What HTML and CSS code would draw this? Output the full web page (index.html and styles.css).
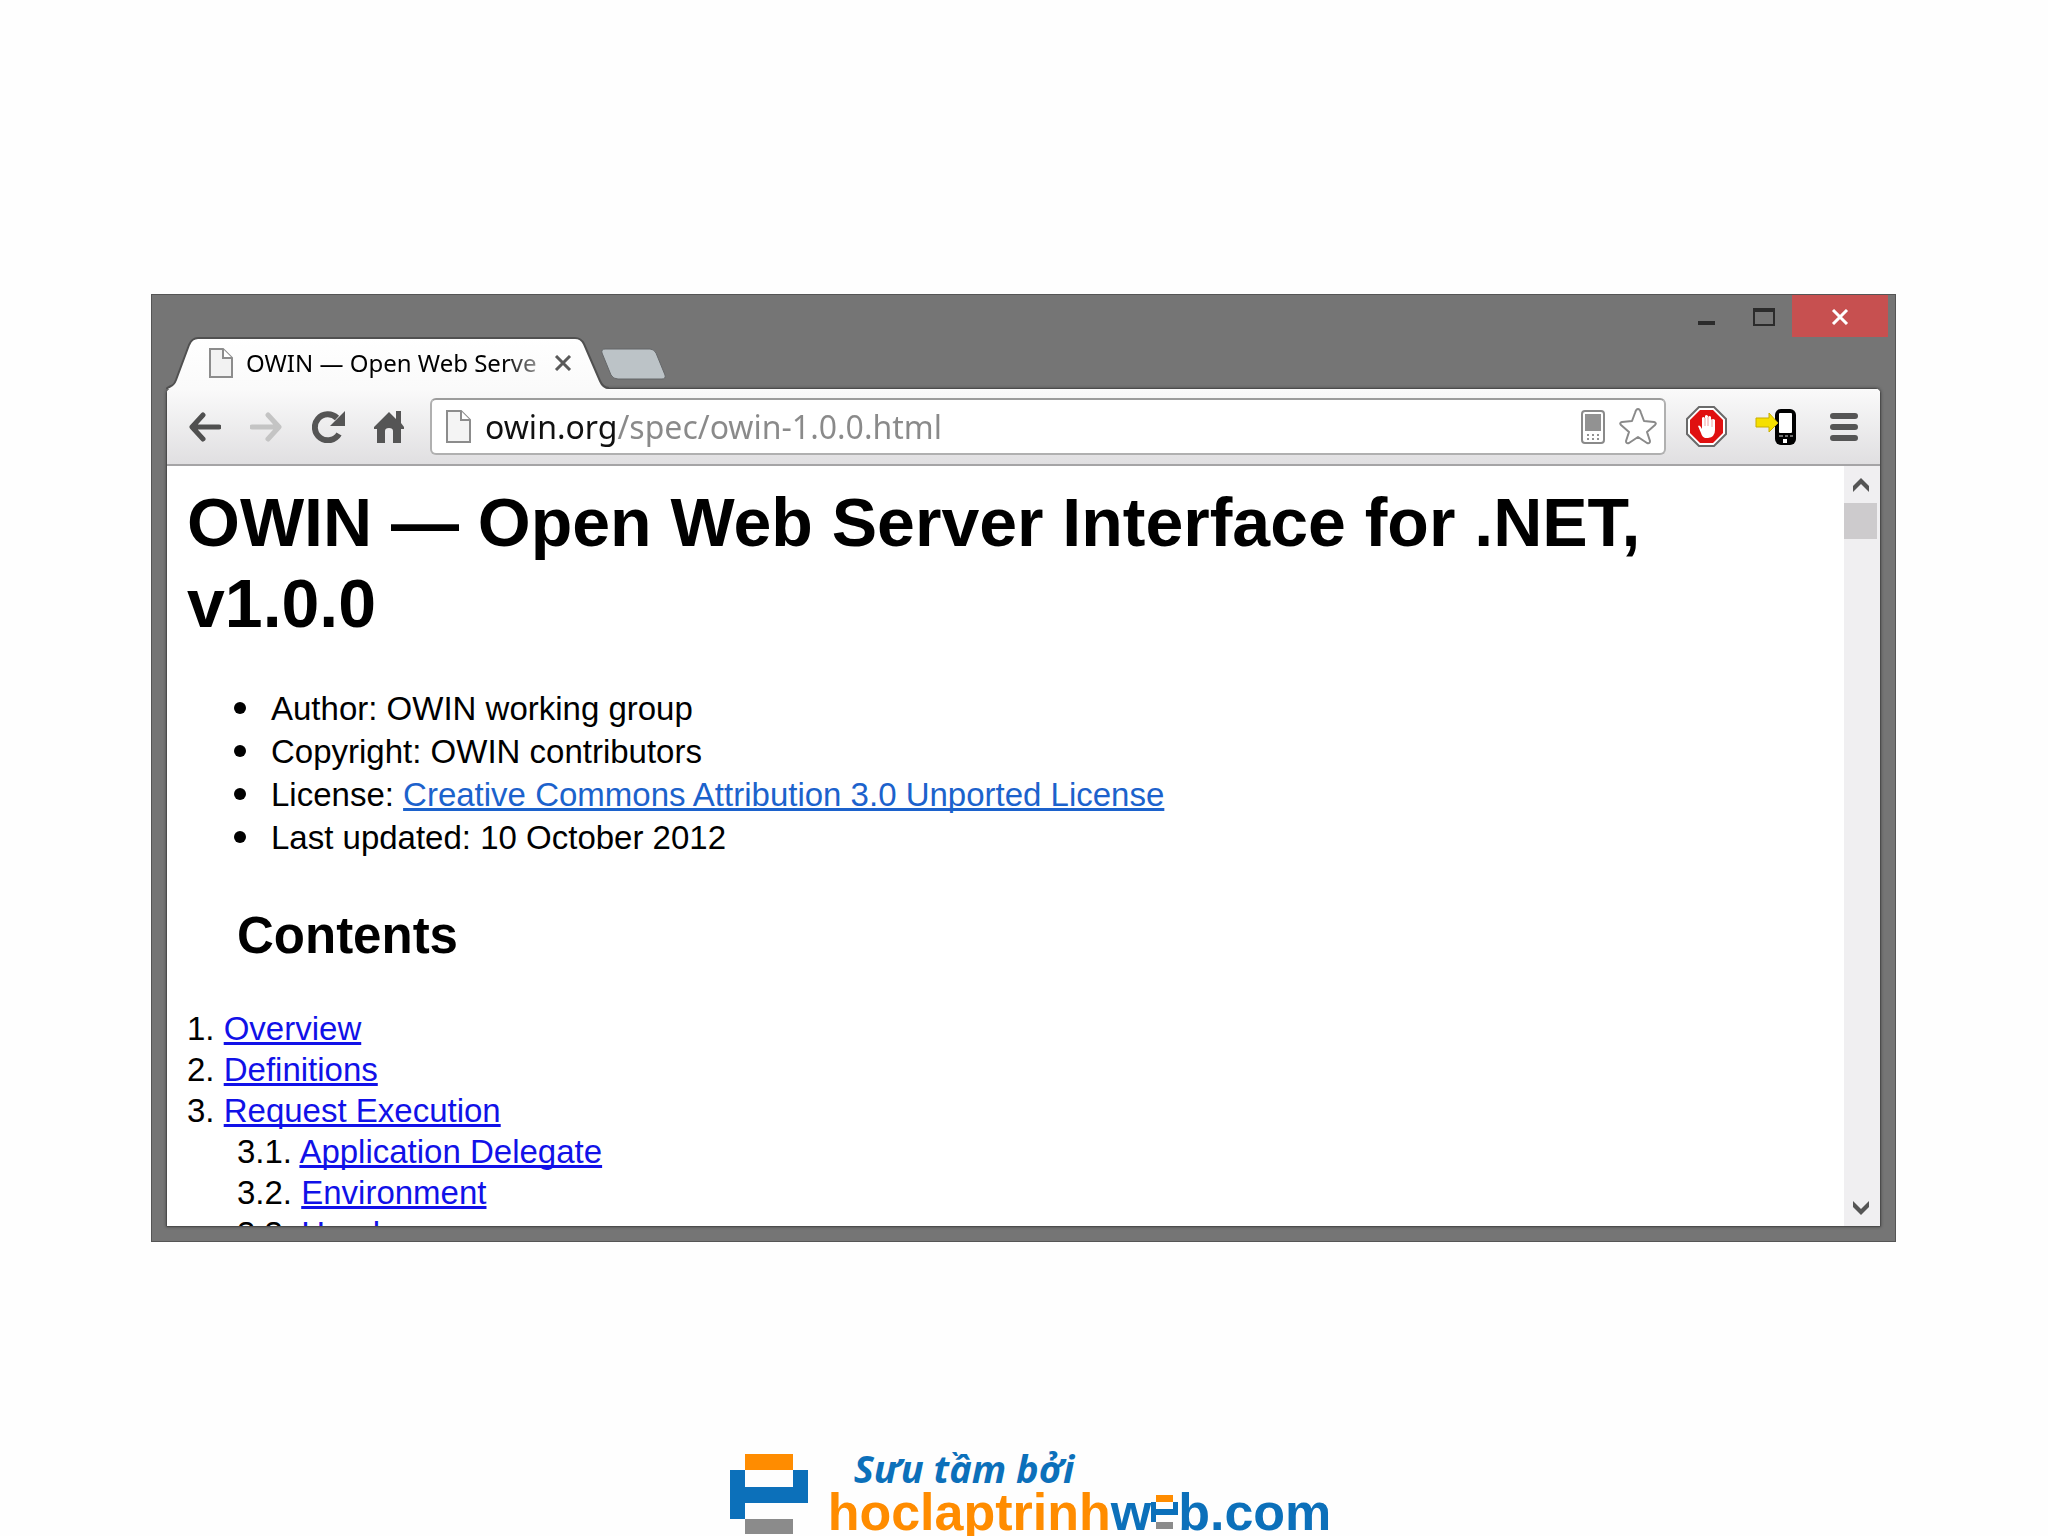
FILE: index.html
```html
<!DOCTYPE html>
<html lang="en">

<head>
	<meta charset="UTF-8" />
	<meta name="viewport" content="width=device-width,initial-scale=1" />
	<title>OWIN — Open Web Server Interface for .NET, v1.0.0</title>
	<link rel="stylesheet" href="styles.css">
</head>

<body>
	<div class="window">
		<div class="controls">
			<button class="control" aria-label="Minimize">
				<svg width="18" height="18" viewBox="0 0 18 18"><path d="M0 13h17v4H0z" fill="#2b2b2b" /></svg>
			</button>
			<button class="control max" aria-label="Maximize">
				<svg width="22" height="18" viewBox="0 0 22 18"><path d="M1 2v15h20V2z" fill="none" stroke="#2b2b2b" stroke-width="2" /><path d="M0 0h22v4H0z" fill="#2b2b2b" /></svg>
			</button>
			<button class="control close" aria-label="Close">
				<svg width="18" height="16" viewBox="0 0 18 16"><path d="M2 1l14 14M16 1L2 15" stroke="#fff" stroke-width="3" /></svg>
			</button>
		</div>

		<div class="tabs">
			<div class="tab">
				<svg class="tab-shape" viewBox="0 0 443 52" preserveAspectRatio="none">
					<defs>
						<linearGradient id="tabfill" x1="0" y1="0" x2="0" y2="1">
							<stop offset="0" stop-color="#fff" />
							<stop offset="1" stop-color="#fafafa" />
						</linearGradient>
					</defs>
					<path d="M0 52Q1 51 5 49Q8 48 10 43L23 8Q26 1 32 1H409Q415 1 418 7L434 44Q437 51 443 52Z" fill="url(#tabfill)" />
					<path d="M0 52Q1 51 5 49Q8 48 10 43L23 8Q26 1 32 1H409Q415 1 418 7L434 44Q437 51 443 51" fill="none" stroke="#505050" stroke-width="2" />
				</svg>
				<div class="tab-content">
					<svg width="24" height="30" viewBox="0 0 24 30"><path d="M1 1h13l9 9v19H1z" fill="#f2f2f2" stroke="#8c8c8c" stroke-width="2" /><path d="M14 1v9h9" fill="#fff" stroke="#8c8c8c" stroke-width="2" /></svg>
					<span class="tab-title">OWIN — Open Web Serve</span>
					<button class="tab-close" aria-label="Close tab">
						<svg width="18" height="16" viewBox="0 0 18 16"><path d="M2 1l14 14M16 1L2 15" stroke="#5a5a5a" stroke-width="3" /></svg>
					</button>
				</div>
			</div>
			<button class="new-tab" aria-label="New tab">
				<svg width="66" height="32" viewBox="0 0 66 32"><path d="M4 1H49Q53 1 55 5L64 27Q65 31 61 31H17Q12 31 10 27L1 5Q0 1 4 1Z" fill="#bcc3c7" stroke="#656769" /></svg>
			</button>
		</div>

		<div class="frame">
			<div class="toolbar">
				<div class="nav">
					<button class="icon" aria-label="Back">
						<svg width="33" height="30" viewBox="0 0 33 30"><path d="M31 15H5M15 3L4 15l11 12" fill="none" stroke="#505050" stroke-width="5" stroke-linecap="round" stroke-linejoin="round" /></svg>
					</button>
					<button class="icon" aria-label="Forward" disabled>
						<svg width="33" height="30" viewBox="0 0 33 30"><path d="M2 15h26M18 3l11 12-11 12" fill="none" stroke="#c4c4c4" stroke-width="5" stroke-linecap="round" stroke-linejoin="round" /></svg>
					</button>
					<button class="icon" aria-label="Reload">
						<svg width="33" height="32" viewBox="0 0 33 32"><path d="M27 23A13 13 0 1 1 25 7" fill="none" stroke="#555" stroke-width="6" /><path d="M33 0v15H18z" fill="#555" /></svg>
					</button>
					<button class="icon" aria-label="Home">
						<svg width="30" height="32" viewBox="0 0 30 32"><path d="M15 1l7 7V0h5v12l3 4v2h-3v14h-8V20q0-3-4-3t-4 3v12H3V18H0v-2z" fill="#555" /></svg>
					</button>
				</div>

				<div class="omnibox">
					<svg width="25" height="33" viewBox="0 0 25 33"><path d="M1 1h14l9 9v22H1z" fill="#f4f4f4" stroke="#8c8c8c" stroke-width="2" /><path d="M15 1v9h9" fill="#fff" stroke="#8c8c8c" stroke-width="2" /></svg>
					<input class="url" type="text" value="owin.org/spec/owin-1.0.0.html" aria-label="Address">
					<button class="icon" aria-label="Send to phone">
						<svg width="24" height="34" viewBox="0 0 24 34"><rect x="1" y="1" width="22" height="32" rx="3" fill="#fff" stroke="#8a8a8a" stroke-width="2" /><path d="M4 4h16v17H4z" fill="#929292" /><path d="M6 25h12M6 29h12" stroke="#929292" stroke-width="2" stroke-dasharray="2 3" /></svg>
					</button>
					<button class="icon" aria-label="Bookmark">
						<svg width="38" height="37" viewBox="0 0 38 37"><path d="M19 1Q21 1 22 5l3 8 10 1q3 1 1 3l-8 7 3 9q0 3-3 2l-9-6-9 6q-3 1-3-2l3-9-8-7q-2-2 1-3l10-1 3-8q1-4 3-4z" fill="#fff" stroke="#8a8a8a" stroke-width="2" stroke-linejoin="round" /></svg>
					</button>
				</div>

				<div class="extensions">
					<button class="icon" aria-label="Ad blocker">
						<svg width="41" height="41" viewBox="0 0 41 41"><path d="M13 1h15l12 12v15L28 40H13L1 28V13z" fill="#fff" stroke="#6a6a6a" stroke-width="2" /><path d="M14 4h13l10 10v13L27 37H14L4 27V14z" fill="#e01010" /><path d="M12 20q2-2 4 3V12q1-2 3 0v-2q1-2 3 0v1q2-2 3 0v3q2-2 4 0v10q0 7-7 8h-3q-3-1-4-5z" fill="#fff" /><path d="M19 12v8M22 11v9M26 13v8" stroke="#f0a0a0" /></svg>
					</button>
					<button class="icon" aria-label="Push to phone">
						<svg width="41" height="38" viewBox="0 0 41 38"><rect x="20" y="1" width="21" height="36" rx="6" fill="#000" /><rect x="24" y="5" width="13" height="20" rx="1" fill="#fff" /><path d="M24 28h4M30 28h3M35 28h3" stroke="#ddd" stroke-width="1" /><path d="M28 31h4v4h-4z" fill="#fff" /><path d="M1 10h13V5l9 10-9 9v-5H1z" fill="#f5df00" stroke="#c9ad00" /></svg>
					</button>
					<button class="icon menu" aria-label="Menu">
						<svg width="28" height="30" viewBox="0 0 28 30"><path d="M3 4h22M3 15h22M3 26h22" stroke="#555" stroke-width="6" stroke-linecap="round" /></svg>
					</button>
				</div>
			</div>

			<div class="viewport">
				<main class="page">
					<h1>OWIN — Open Web Server Interface for .NET, v1.0.0</h1>
					<ul class="meta">
						<li>Author: OWIN working group</li>
						<li>Copyright: OWIN contributors</li>
						<li>License: <a class="license" href="#license">Creative Commons Attribution 3.0 Unported License</a></li>
						<li>Last updated: 10 October 2012</li>
					</ul>
					<h2>Contents</h2>
					<ol class="toc">
						<li>1. <a href="#overview">Overview</a></li>
						<li>2. <a href="#definitions">Definitions</a></li>
						<li>3. <a href="#execution">Request Execution</a>
							<ol>
								<li>3.1. <a href="#delegate">Application Delegate</a></li>
								<li>3.2. <a href="#environment">Environment</a></li>
								<li>3.3. <a href="#headers">Headers</a></li>
							</ol>
						</li>
					</ol>
				</main>
				<div class="scrollbar">
					<button class="scroll-btn" aria-label="Scroll up">
						<svg width="16" height="14" viewBox="0 0 16 14"><path d="M0 8l8-8 8 8v6L8 6l-8 8z" fill="#555" /></svg>
					</button>
					<div class="thumb"></div>
					<button class="scroll-btn down" aria-label="Scroll down">
						<svg width="16" height="14" viewBox="0 0 16 14"><path d="M0 6l8 8 8-8V0L8 8 0 0z" fill="#555" /></svg>
					</button>
				</div>
			</div>
		</div>
	</div>

	<footer class="footer">
		<div class="brand">
			<svg class="brand-mark" width="78" height="80" viewBox="0 0 78 80"><path d="M15 0h48v16H15z" fill="#ff8c00" /><path d="M0 16h15v17h48V16h15v33H15v16H0z" fill="#0c70ba" /><path d="M15 65h48v15H15z" fill="#8b8b8b" /></svg>
			<div class="brand-text">
				<span class="tagline" lang="vi">Sưu tầm bởi</span>
				<span class="site"><span class="orange">hoclaptrinh</span>w<svg width="27" height="34" viewBox="0 0 27 34"><path d="M5 0h17v7H5z" fill="#ff8c00" /><path d="M0 7h5v7h17V7h5v13H5v7H0z" fill="#0c70ba" /><path d="M5 27h17v7H5z" fill="#8b8b8b" /></svg>b.com</span>
			</div>
		</div>
	</footer>
</body>

</html>
```
FILE: styles.css
```css
* {
	box-sizing: border-box;
	margin: 0;
	padding: 0;
}

body {
	height: 100vh;
	display: flex;
	flex-direction: column;
	padding: 294px 152px 0 151px;
	overflow: hidden;
	background: #fefefe;
	font-family: "Liberation Sans", Arial, sans-serif;
	color: #000;
}

button {
	border: none;
	background: none;
	cursor: pointer;
}

svg {
	display: block;
	flex: none;
}

/* window frame */
.window {
	flex: 1;
	min-height: 0;
	display: flex;
	flex-direction: column;
	padding: 0 14px 14px;
	background: #757575;
	border: 1px solid #555;
}

.controls {
	display: flex;
	justify-content: flex-end;
	align-items: flex-start;
	height: 42px;
	margin-right: -7px;
}

.control {
	display: flex;
	justify-content: center;
	align-items: center;
	width: 58px;
	height: 42px;
	padding-top: 2px;
}

.control.close {
	width: 96px;
	background: #c75050;
}

.control.max {
	width: 56px;
}

/* tabs */
.tabs {
	display: flex;
	align-items: flex-start;
	height: 51px;
}

.tab {
	position: relative;
	z-index: 1;
	width: 443px;
	height: 52px;
}

.tab-shape {
	position: absolute;
	inset: 0;
	width: 100%;
	height: 100%;
}

.tab-content {
	position: relative;
	display: flex;
	align-items: center;
	height: 52px;
	padding-left: 43px;
}

.tab-title {
	width: 293px;
	margin: 0 15px 0 13px;
	overflow: hidden;
	white-space: nowrap;
	font: 24px/34px "Noto Sans", sans-serif;
	-webkit-mask-image: linear-gradient(to right, #000 88%, #0006);
	mask-image: linear-gradient(to right, #000 88%, #0006);
}

.new-tab {
	margin: 11px 0 0 -8px;
}

/* toolbar */
.frame {
	flex: 1;
	min-height: 0;
	display: flex;
	flex-direction: column;
	background: #fff;
	border: 1px solid #4c4c4c;
	border-radius: 5px 5px 0 0;
	box-shadow: 0 0 3px #444;
	overflow: hidden;
}

.toolbar {
	display: flex;
	align-items: center;
	gap: 20px;
	padding: 0 22px 0 21px;
	height: 77px;
	background: linear-gradient(#fafafa, #e0dfe1);
	border-bottom: 2px solid #a5a4a6;
}

.nav {
	display: flex;
	align-items: center;
	gap: 29px;
	margin-right: 6px;
}

.icon {
	display: flex;
}

.omnibox {
	flex: 1;
	display: flex;
	align-items: center;
	gap: 14px;
	height: 57px;
	padding: 0 7px 0 14px;
	background: #fff;
	border: 2px solid #b0b0b0;
	border-top-color: #9c9c9c;
	border-radius: 6px;
}

.url {
	flex: 1;
	min-width: 0;
	border: none;
	outline: none;
	font: 32px/44px "Noto Sans", sans-serif;
	/* host is dark, the path is grey */
	background: linear-gradient(to right, #111 130px, #8a8a8a 130px);
	-webkit-background-clip: text;
	background-clip: text;
	-webkit-text-fill-color: transparent;
}

.extensions {
	display: flex;
	align-items: center;
	gap: 28px;
}

.menu {
	margin-left: 6px;
}

/* page */
.viewport {
	flex: 1;
	min-height: 0;
	display: flex;
}

.page {
	flex: 1;
	padding: 16px 20px 0;
	overflow: hidden;
	font-size: 33px;
}

h1 {
	font-size: 68px;
	line-height: 81px;
}

.meta {
	margin-top: 43px;
	padding-left: 47px;
	line-height: 43px;
	list-style: none;
}

.meta li::before {
	content: "";
	display: inline-block;
	width: 12px;
	height: 12px;
	margin-right: 25px;
	border-radius: 50%;
	background: #000;
	vertical-align: 6px;
}

h2 {
	margin: 47px 0 42px 50px;
	font-size: 51px;
	line-height: 60px;
}

.toc,
.toc ol {
	list-style: none;
	line-height: 41px;
}

.toc ol {
	padding-left: 50px;
}

a {
	color: #1111e8;
	text-decoration-skip-ink: none;
}

a.license {
	color: #1c62cc;
}

.scrollbar {
	display: flex;
	flex-direction: column;
	width: 36px;
	padding: 1px 3px 0 0;
	background: #f0eff1;
}

.scroll-btn {
	display: flex;
	justify-content: center;
	align-items: center;
	height: 36px;
}

.scroll-btn.down {
	margin-top: auto;
}

.thumb {
	height: 36px;
	background: #cdcbcd;
}

/* footer */
.footer {
	flex: none;
	display: flex;
	justify-content: center;
	align-items: flex-end;
	height: 294px;
}

.brand {
	display: flex;
	align-items: flex-start;
	gap: 20px;
	height: 82px;
	margin-left: 14px;
	color: #0c70ba;
	font-weight: bold;
}

.brand-text {
	display: flex;
	flex-direction: column;
}

.tagline {
	margin: -5px 0 0 26px;
	font: italic bold 38px/38px "Open Sans", sans-serif;
}

.site {
	display: flex;
	align-items: center;
	font-size: 52px;
	line-height: 50px;
}

.orange {
	color: #ff8c00;
}
```
